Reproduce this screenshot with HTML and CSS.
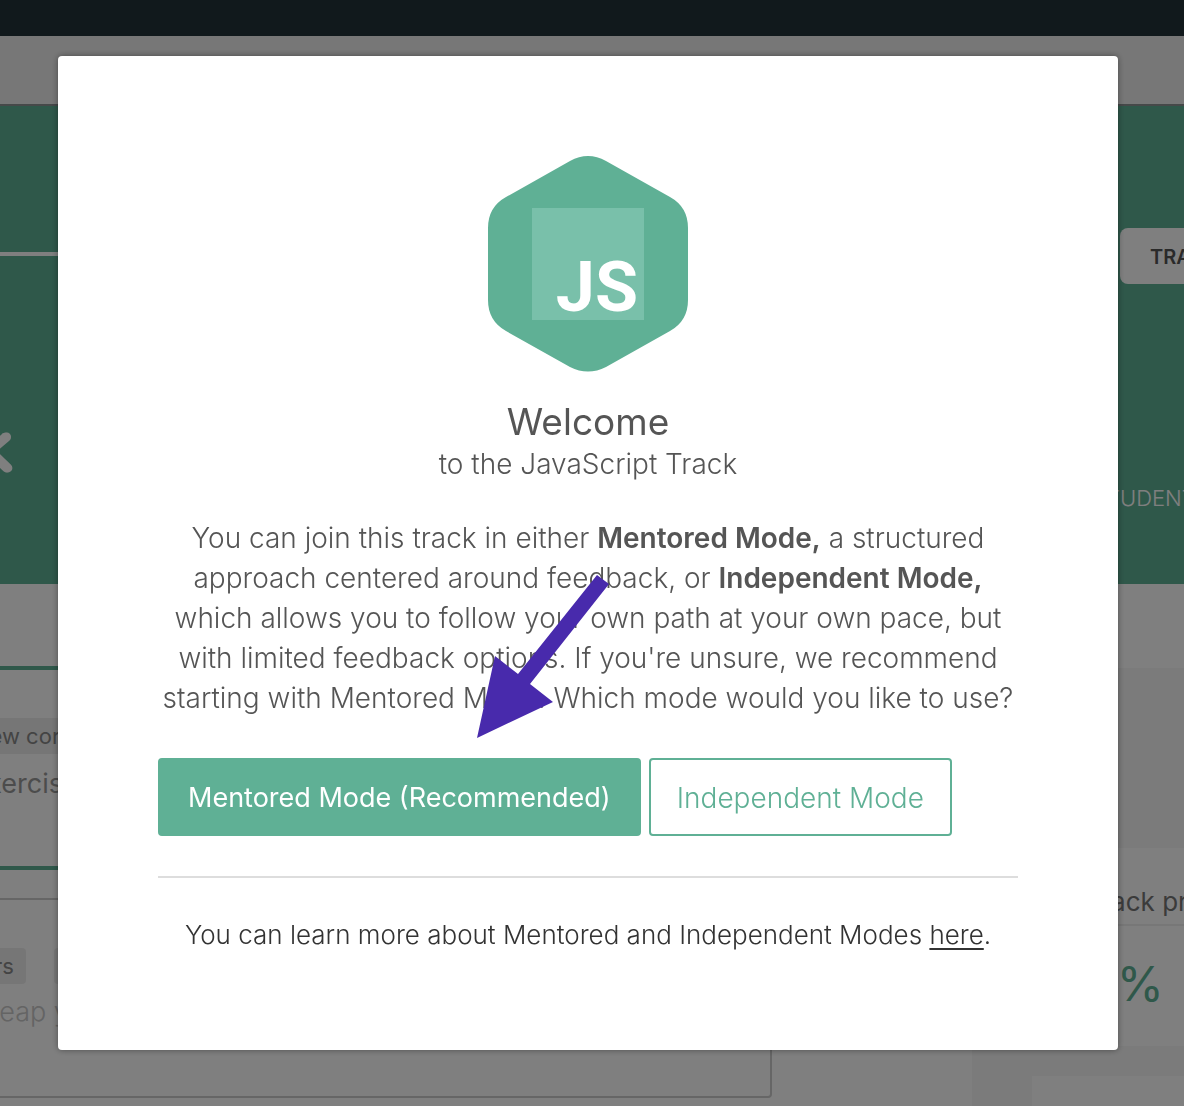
FILE: index.html
```html
<!DOCTYPE html>
<html lang="en">
<head>
<meta charset="utf-8">
<meta name="viewport" content="width=device-width, initial-scale=1">
<title>Welcome to the JavaScript Track</title>
<link rel="stylesheet" href="styles.css">
</head>
<body>
<div class="page" aria-hidden="true">
  <div class="topbar"></div>
  <div class="subnav"></div>
  <header class="hero">
    <div class="hero-top">
      <button class="hero-button" type="button" tabindex="-1">TRACK</button>
    </div>
    <div class="hero-main">
      <svg class="hero-title" viewBox="0 0 60 80"><text x="47" y="60" text-anchor="end">k</text></svg>
      <div class="hero-stat">TUDENTS</div>
    </div>
  </header>
  <div class="content">
    <main class="exercises">
      <div class="tabs"></div>
      <section class="core">
        <span class="tag">few core</span>
        <p class="core-text">exercises</p>
      </section>
      <section class="side-box">
        <div class="tags"><span class="tag">rs</span><span class="tag">loops</span></div>
        <p class="side-text">Leap year</p>
      </section>
    </main>
    <aside class="sidebar">
      <section class="card">
        <h3 class="card-title">Track progress</h3>
        <p class="card-value">0%</p>
      </section>
      <section class="card card-next"></section>
    </aside>
  </div>
</div>

<div class="overlay">
  <div class="modal" role="dialog" aria-modal="true" aria-labelledby="welcome">
    <svg class="logo" viewBox="0 0 200 216" role="img" aria-label="JavaScript">
      <path fill="#5fb095" d="M82 5Q100-5 118 5L182 41Q200 51 200 72V144Q200 165 182 175L118 211Q100 220 82 211L18 175Q0 165 0 144V72Q0 51 18 41Z"/>
      <rect x="44" y="52" width="112" height="112" fill="#79c0aa"/>
      <text class="logo-text" x="150" y="155" text-anchor="end">JS</text>
    </svg>
    <h1 class="title" id="welcome">Welcome</h1>
    <h2 class="subtitle">to the JavaScript Track</h2>
    <div class="intro">
      <p class="intro-text">You can join this track in either <strong>Mentored Mode,</strong> a structured<br>approach centered around feedback, or <strong>Independent Mode,</strong><br>which allows you to follow your own path at your own pace, but<br>with limited feedback options. If you're unsure, we recommend<br>starting with Mentored Mode. Which mode would you like to use?</p>
      <svg class="arrow" viewBox="0 0 132 164" aria-hidden="true">
        <path fill="#482aac" d="M120 1L132 10L53 110L76 128L0 164L18 82L41 100Z"/>
      </svg>
    </div>
    <div class="actions">
      <button class="btn btn-primary" type="button">Mentored Mode (Recommended)</button>
      <button class="btn btn-outline" type="button">Independent Mode</button>
    </div>
    <p class="more">You can learn more about Mentored and Independent Modes <a href="#">here</a>.</p>
  </div>
</div>
</body>
</html>
```
FILE: styles.css
```css
* { box-sizing: border-box; }

body {
  margin: 0;
  font-family: Inter, "Liberation Sans", sans-serif;
  font-weight: 300;
  color: #333;
  background: #fff;
}

h1, h2, h3, p { margin: 0; font-weight: inherit; }
button { font: inherit; }

/* Track page behind the dialog */
.page { min-height: 100vh; overflow: hidden; display: flex; flex-direction: column; }
.topbar { height: 36px; background: #223338; }
.subnav { height: 68px; background: #efefef; }

.hero {
  border-top: 2px solid #8c9293;
  background: #5fb095;
  color: #fff;
  height: 480px;
}
.hero-top {
  height: 150px;
  display: flex;
  justify-content: flex-end;
  align-items: flex-end;
  border-bottom: 4px solid #fff;
  border-image: linear-gradient(90deg, #fff 50%, #5fb095 50%) 1;
}
.hero-button {
  width: 64px;
  height: 56px;
  margin-bottom: -32px;
  padding: 2px 0 0 30px;
  overflow: hidden;
  border: 0;
  border-radius: 8px 0 0 8px;
  background: #fff;
  color: #555;
  font-size: 20px;
  font-weight: 600;
  text-align: left;
}
.hero-main { display: flex; justify-content: space-between; }
.hero-title {
  width: 60px;
  height: 80px;
  margin: 152px 0 0 -38px;
  fill: #fff;
  stroke: #fff;
  stroke-width: 9px;
  stroke-linejoin: round;
  font-family: Lato, sans-serif;
  font-size: 64px;
  font-weight: 100;
}
.hero-stat { width: 78px; margin-top: 226px; font-size: 22px; line-height: 32px; }

.content { flex: 1; display: flex; justify-content: space-between; }
.exercises { margin-left: -48px; flex: 0 0 820px; }
.tabs { height: 86px; border-bottom: 4px solid #5fb095; }
.core { height: 200px; padding: 48px 0 0 18px; border-bottom: 4px solid #5fb095; }
.tag {
  display: inline-block;
  padding: 0 12px;
  border-radius: 4px;
  background: #ededed;
  color: #888;
  font-size: 22px;
  font-weight: 400;
  line-height: 36px;
}
.core-text { padding: 10px 0 0 2px; color: #999; font-size: 27px; line-height: 40px; font-weight: 400; }
.side-box {
  height: 200px;
  margin-top: 28px;
  padding: 48px 28px;
  border: 2px solid #ccc;
  border-radius: 4px;
}
.tags { display: flex; gap: 28px; }
.side-text { padding: 8px 0 0 2px; color: #c8c8c8; font-size: 27px; line-height: 40px; }

.sidebar {
  display: flex;
  flex-direction: column;
  gap: 30px;
  width: 212px;
  margin-top: 84px;
  padding: 180px 0 0 60px;
  background: #f6f6f6;
}
.card { height: 198px; background: #fff; overflow: hidden; }
.card-next { flex: 1; height: auto; }
.card-title {
  height: 78px;
  padding: 34px 0 0 54px;
  border-bottom: 2px solid #eee;
  color: #777;
  font-size: 26px;
  font-weight: 400;
  line-height: 40px;
  white-space: nowrap;
}
.card-value {
  padding: 28px 20px 0 0;
  color: #5fb095;
  font-size: 48px;
  font-weight: 400;
  line-height: 60px;
  text-align: right;
}

/* Dialog */
.overlay {
  position: fixed;
  inset: 0;
  padding: 56px 66px 56px 58px;
  background: rgba(0, 0, 0, .5);
  overflow: auto;
}
.modal {
  padding: 100px 100px 98px;
  border-radius: 4px;
  background: #fff;
  box-shadow: 0 0 6px rgba(0, 0, 0, .4);
  color: #555;
  text-align: center;
}
.logo { display: block; width: 200px; height: 216px; margin: 0 auto; }
.logo-text { fill: #fff; font-family: Roboto, sans-serif; font-size: 70px; font-weight: 700; }
.title { margin-top: 26px; font-size: 37px; font-weight: 400; line-height: 48px; }
.subtitle { font-size: 28px; line-height: 36px; }
.intro { position: relative; margin-top: 36px; }
.intro-text { margin: 0 -20px; font-size: 28px; line-height: 40px; }
.intro-text strong { font-weight: 600; }
.arrow { position: absolute; top: 56px; left: 319px; width: 132px; height: 164px; }

.actions { display: flex; gap: 8px; margin-top: 40px; padding-bottom: 40px; border-bottom: 2px solid #ddd; }
.btn {
  padding: 2px 26px 0;
  border: 2px solid #5fb095;
  border-radius: 4px;
  font-size: 28px;
  line-height: 72px;
  white-space: nowrap;
  cursor: pointer;
}
.btn-primary { padding: 2px 28px 0; background: #5fb095; color: #fff; font-size: 27px; font-weight: 400; }
.btn-outline { background: #fff; color: #5fb095; }
.more { margin-top: 40px; color: #333; font-size: 26px; line-height: 34px; }
.more a { color: inherit; text-underline-offset: 4px; }
```
